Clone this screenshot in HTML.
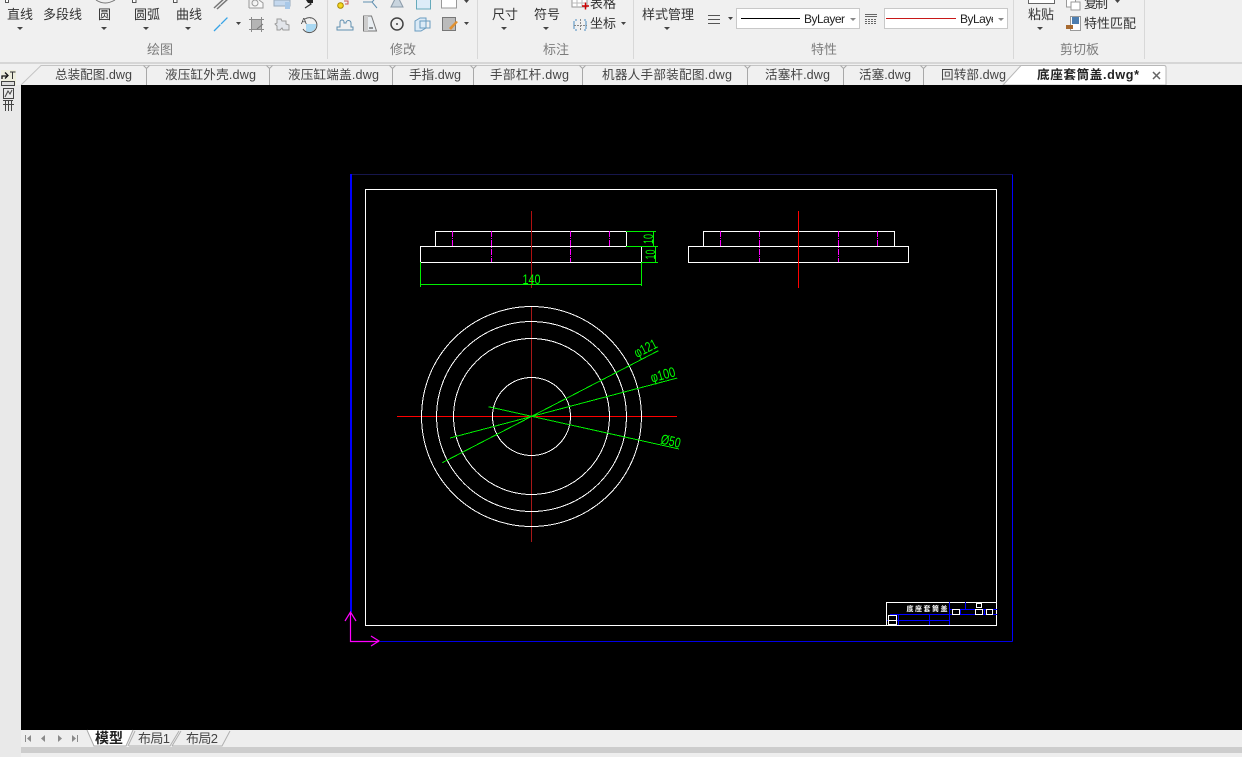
<!DOCTYPE html>
<html><head><meta charset="utf-8">
<style>
html,body{margin:0;padding:0;background:#f0f0f0;width:1242px;height:757px;overflow:hidden}
svg{display:block;position:absolute;left:0;top:0}
text{font-family:"Liberation Sans","Noto Sans CJK SC",sans-serif}
.r{font-size:13px;fill:#333}
.g{font-size:13px;fill:#7c7c7c}
.t{font-size:12.6px;fill:#444}
.d{font-size:14px;fill:#00ff00}
.a{fill:#444}
</style></head>
<body>
<svg width="1242" height="757" viewBox="0 0 1242 757" xmlns="http://www.w3.org/2000/svg">
<rect width="1242" height="757" fill="#f0f0f0"/>
<!-- ribbon separators -->
<g fill="#d8d8d8">
<rect x="327" y="0" width="1" height="59"/><rect x="477" y="0" width="1" height="59"/><rect x="633" y="0" width="1" height="59"/><rect x="1013" y="0" width="1" height="59"/><rect x="1144" y="0" width="1" height="59"/>
</g>
<rect x="0" y="62" width="1242" height="2" fill="#d6d6d6"/>
<!-- ribbon labels -->
<text class="r" x="7" y="19" textLength="26">直线</text>
<text class="r" x="43" y="19" textLength="39">多段线</text>
<text class="r" x="98" y="19" textLength="13">圆</text>
<text class="r" x="134" y="19" textLength="26">圆弧</text>
<text class="r" x="176" y="19" textLength="26">曲线</text>
<text class="r" x="492" y="19" textLength="26">尺寸</text>
<text class="r" x="534" y="19" textLength="26">符号</text>
<text class="r" x="590" y="8" textLength="26">表格</text>
<text class="r" x="590" y="28" textLength="26">坐标</text>
<text class="r" x="642" y="19" textLength="52">样式管理</text>
<text class="r" x="1028" y="19" textLength="26">粘贴</text>
<text class="r" x="1084" y="8" textLength="24">复制</text>
<text class="r" x="1084" y="28" textLength="52">特性匹配</text>
<text class="g" x="147" y="54" textLength="26">绘图</text>
<text class="g" x="390" y="54" textLength="26">修改</text>
<text class="g" x="543" y="54" textLength="26">标注</text>
<text class="g" x="811" y="54" textLength="26">特性</text>
<text class="g" x="1060" y="54" textLength="39">剪切板</text>
<!-- dropdown arrows -->
<g class="a">
<path d="M17 27h6l-3 3z"/><path d="M101 27h6l-3 3z"/><path d="M143 27h6l-3 3z"/><path d="M185 27h6l-3 3z"/>
<path d="M236 22h5l-2.500 3z"/><path d="M464 22h5l-2.500 3z"/><path d="M464 0h5l-2.500 3z"/>
<path d="M501 27h6l-3 3z"/><path d="M543 27h6l-3 3z"/><path d="M621 22h5l-2.500 3z"/><path d="M664 27h6l-3 3z"/>
<path d="M728 17h5l-2.500 3z"/><path d="M1037 27h6l-3 3z"/><path d="M1115 0h5l-2.500 3z"/>
</g>
<!-- draw group icons, clipped at top -->
<g fill="none" stroke="#555">
<rect x="5.500" y="-2" width="3" height="4.500" fill="#fff"/>
<path d="M96 0 Q105 6 115 0" stroke="#777"/>
<rect x="132.500" y="-2" width="3.500" height="4.500" fill="#fff"/>
<rect x="173.500" y="-2" width="3.500" height="4.500" fill="#fff"/>
</g>
<path d="M214 31L228 17" stroke="#36a3e6" stroke-width="1.300" stroke-dasharray="9 1"/>
<path d="M214 8L226 -3M217 9L229 -2" stroke="#777" stroke-width="1.500" fill="none"/>
<path d="M249 8V0M249 8H263V3L259 0" fill="#f8f8f8" stroke="#999"/><circle cx="255" cy="3" r="3" fill="none" stroke="#999"/>
<rect x="274" y="0" width="16" height="6" fill="#c4d8ee" stroke="#9ab"/><rect x="285" y="2" width="5" height="7" fill="#a8c8e8"/>
<path d="M308 1L311 4L305 8" fill="none" stroke="#333" stroke-width="1.200"/><path d="M306 0h7v3h-5z" fill="#222"/>
<!-- hatch, region, boundary -->
<rect x="251.500" y="19.500" width="10" height="10" fill="#b4b4b4" stroke="#999"/>
<path d="M249 19.500h15M249 29.500h15M251.500 17v15M261.500 17v15" stroke="#8a8a8a" fill="none"/>
<path d="M257 29L263 24" stroke="#777"/>
<path d="M277 19h4l1 2h4v3l3 1v5h-6l-1-2-2 2h-3v-4l-2-2 2-1z" fill="#e2e5ea" stroke="#9a9a9a"/>
<path d="M306 24H316A7 7 0 0 1 306 31.300Z" fill="#a9d8f2"/>
<path d="M305 19A7.500 7.500 0 1 1 303 29M310 18a7 7 0 0 1 2 0" fill="none" stroke="#555"/>
<text x="301" y="24" style="font-size:8.500px;fill:#333">A</text>
<!-- modify icons -->
<circle cx="340.500" cy="5.500" r="2.800" fill="#f4d820" stroke="#a80"/><path d="M344 1h4v3h-3" fill="none" stroke="#c55"/>
<path d="M363 2h9l5 6M372 2l2-2" fill="none" stroke="#5f8fb0"/>
<path d="M391 7l4-8h4l4 8z" fill="#c8d4de" stroke="#8a9aa8"/>
<rect x="416.500" y="-2" width="14" height="11" fill="#dcecf8" stroke="#6ab"/>
<rect x="441.500" y="-2" width="15" height="10" fill="#fff" stroke="#999"/>
<path d="M337 30h16v-3h-2v-4a2.500 2.500 0 0 0-5 0h-2v-1a2 2 0 0 0-4 0v5h-3z" fill="none" stroke="#5f8fb0"/>
<path d="M363.500 16h8l5 15h-13z" fill="#e9eef2" stroke="#777"/><path d="M364 16h4v15h-4z" fill="#ccc"/><path d="M369 28h4" stroke="#333"/>
<circle cx="397" cy="24" r="6" fill="none" stroke="#444" stroke-width="1.500"/><circle cx="397" cy="24" r="1" fill="#444"/>
<path d="M415 21l5-3h6v10l-5 3h-6z" fill="#dbeaf6" stroke="#6a9cc0"/><path d="M420 21h10v7h-10z" fill="none" stroke="#6a9cc0"/>
<rect x="442.500" y="17.500" width="13" height="13" fill="#bbb" stroke="#777"/><path d="M449 28l7-7 2 1-7 8z" fill="#e09030"/>
<!-- annotation icons -->
<path d="M572 -2h15v9h-15z" fill="#fff" stroke="#999"/><path d="M577 -2v9M582 -2v9M572 3h15" stroke="#bbb"/><path d="M582 6h7M585.500 2.500v7" stroke="#c00" stroke-width="1.500"/>
<path d="M575 20h2M584 20h2M575 30h2M584 30h2M574 21v8M586 21v8" stroke="#4a8cc0" fill="none"/>
<path d="M580.500 19v12M574 25.500h13" stroke="#888" stroke-dasharray="2 1" fill="none"/>
<!-- properties -->
<path d="M708 15.500h12M708 19.500h12M708 23.500h12" stroke="#555"/>
<rect x="736.500" y="8.500" width="123" height="20" fill="#fff" stroke="#c8c8c8"/>
<rect x="741" y="18" width="59" height="1" fill="#000"/>
<text x="804" y="23" style="font-size:12px;fill:#222" textLength="41">ByLayer</text>
<path d="M850 18h6l-3 3z" fill="#888"/>
<path d="M865 14.500h12M865 16.500h12" stroke="#666"/>
<path d="M865 19.500h12M865 21.500h12M865 23.500h12" stroke="#666" stroke-dasharray="2 1"/>
<rect x="884.500" y="8.500" width="123" height="20" fill="#fff" stroke="#c8c8c8"/>
<rect x="886" y="18" width="70" height="1" fill="#c81818"/>
<svg x="960" y="8" width="33" height="20"><text x="0" y="15" style="font-size:12px;fill:#222" textLength="41">ByLayer</text></svg>
<path d="M998 18h6l-3 3z" fill="#888"/>
<!-- clipboard icons -->
<rect x="1028.500" y="-4" width="26" height="7.500" fill="#fff" stroke="#666"/>
<rect x="1066.500" y="-4" width="9" height="11" fill="#fff" stroke="#999"/><path d="M1071 2h9v8h-9z" fill="#fff" stroke="#999"/>
<path d="M1070.500 16.500h10v14h-10z" fill="#fff" stroke="#999"/><rect x="1072" y="17" width="7" height="7" fill="#4d7eb0"/><path d="M1066 25h7v4h-7z" fill="#a86a30"/>
<!-- tabs -->
<path d="M21 85L41 65.500H1021" fill="none" stroke="#c4c4c4"/>
<g fill="none" stroke="#a8a8a8">
<path d="M146.500 68V85M269.500 68V85M392.500 68V85M473.500 68V85M582.500 68V85M747.500 68V85M843.500 68V85M923.500 68V85"/>
<path d="M143.500 65.500l3 3 3-3M266.500 65.500l3 3 3-3M389.500 65.500l3 3 3-3M470.500 65.500l3 3 3-3M579.500 65.500l3 3 3-3M744.500 65.500l3 3 3-3M840.500 65.500l3 3 3-3M920.500 65.500l3 3 3-3"/>
</g>
<path d="M1003 85L1021 65.500H1164q2 0 2 2V85z" fill="#fff" stroke="#b8b8b8"/>
<text class="t" x="55" y="79" textLength="77">总装配图.dwg</text>
<text class="t" x="165" y="79" textLength="91">液压缸外壳.dwg</text>
<text class="t" x="288" y="79" textLength="91">液压缸端盖.dwg</text>
<text class="t" x="409" y="79" textLength="52">手指.dwg</text>
<text class="t" x="490" y="79" textLength="79">手部杠杆.dwg</text>
<text class="t" x="602" y="79" textLength="130">机器人手部装配图.dwg</text>
<text class="t" x="765" y="79" textLength="65">活塞杆.dwg</text>
<text class="t" x="859" y="79" textLength="52">活塞.dwg</text>
<text class="t" x="941" y="79" textLength="65">回转部.dwg</text>
<text x="1037" y="79" style="font-size:12.600px;font-weight:700;fill:#222" textLength="102">底座套筒盖.dwg*</text>
<path d="M1153 72l7 7M1160 72l-7 7" stroke="#666" stroke-width="1.500"/>
<!-- left rail -->
<rect x="0" y="85" width="21" height="672" fill="#e9e9e9"/>
<rect x="1" y="70" width="15" height="16" fill="#eeeedd"/>
<path d="M2 79v-3h5M5 72.500l3 3-3 3" fill="none" stroke="#111" stroke-width="1.300"/><path d="M10 72h5.500M12.500 72v7" stroke="#333"/>
<rect x="1.500" y="81.500" width="13" height="4" fill="#ddd" stroke="#444"/>
<rect x="3.500" y="88.500" width="10" height="10" fill="none" stroke="#444"/><path d="M5 97l3-6 2 3 2-4" fill="none" stroke="#444"/>
<path d="M3 100.500h10M5.500 100v11M8.500 100v11M11.500 100v11M3 104.500h11" fill="none" stroke="#444"/>
<!-- canvas -->
<rect x="21" y="85" width="1221" height="645" fill="#000"/>
<g shape-rendering="crispEdges" fill="none" stroke-width="1">
<path d="M380 641.500H1012.500" stroke="#0000e6"/>
<path d="M351 174.500H1012.500" stroke="#16164c"/>
<rect x="350" y="174" width="2" height="438" fill="#0000ff"/>
<path d="M1012.500 174.500V641.500" stroke="#0000ff"/>
<rect x="365.500" y="189.500" width="631" height="436" stroke="#fff"/>
<!-- left view -->
<rect x="435.500" y="231.500" width="191" height="15" stroke="#fff"/>
<rect x="420.500" y="246.500" width="221" height="16" stroke="#fff"/>
<path d="M452.500 231V246M491.500 231V262M570.500 231V262M609.500 231V246" stroke="#ff00ff" stroke-dasharray="6 1 1 1"/>
<path d="M531.500 211V288" stroke="#b01010"/>
<path d="M420.500 262V287M641.500 262V286M420 284.500H642" stroke="#00f000"/>
<path d="M626 231.500H656M626 246.500H658M641 262.500H658M653.500 231V247M655.500 246V263" stroke="#00f000"/>
<!-- right view -->
<rect x="703.500" y="231.500" width="191" height="15" stroke="#fff"/>
<rect x="688.500" y="246.500" width="220" height="16" stroke="#fff"/>
<path d="M720.500 231V246M759.500 231V262M838.500 231V262M877.500 231V246" stroke="#ff00ff" stroke-dasharray="6 1 1 1"/>
<path d="M798.500 211V288" stroke="#ff0000"/>
<!-- circle axes -->
<path d="M397 416.500H677" stroke="#ff0000"/>
<path d="M531.500 306V542" stroke="#a81818"/>
<!-- title block -->
<rect x="886.500" y="602.500" width="110" height="23" stroke="#fff"/>
<path d="M949.500 602V625M949 609.500H997M949 614.500H997M965.500 602V609M887 620.500H949M890 614.500H949M898.500 614V625M929.500 614V625M960.500 609V614M984.500 609V614" stroke="#0000ff"/>
<rect x="952.500" y="609.500" width="7" height="5" stroke="#fff" fill="#000"/>
<rect x="975.500" y="609.500" width="7" height="5" stroke="#fff" fill="#000"/>
<rect x="986.500" y="609.500" width="6" height="5" stroke="#fff" fill="#000"/>
<rect x="976.500" y="603.500" width="5" height="4" stroke="#fff" fill="#000"/>
<rect x="888.500" y="615.500" width="8" height="9" stroke="#fff" fill="#000"/>
<path d="M888 620.500H897" stroke="#fff"/>
</g>
<g fill="none" stroke="#fff" stroke-width="1" shape-rendering="crispEdges">
<circle cx="531.500" cy="416.500" r="110"/>
<circle cx="531.500" cy="416.500" r="95"/>
<circle cx="531.500" cy="416.500" r="78"/>
<circle cx="531.500" cy="416.500" r="39"/>
</g>
<path d="M442.300 462.700L658.300 350.700M450 438L677.300 378M488.300 406.700L679 449" stroke="#00f000" fill="none" shape-rendering="crispEdges"/>
<!-- UCS -->
<path d="M350.500 612V641.500H379M345 621L350.500 612L356 621M371 636L379 641L371 646" fill="none" stroke="#ff00ff" stroke-width="1.200"/>
<!-- dims text -->
<text class="d" x="522.500" y="284" textLength="18" lengthAdjust="spacingAndGlyphs">140</text>
<text class="d" transform="translate(653,244) rotate(-90)" textLength="10" lengthAdjust="spacingAndGlyphs">10</text>
<text class="d" transform="translate(655,259.500) rotate(-90)" textLength="10" lengthAdjust="spacingAndGlyphs">10</text>
<text class="d" transform="translate(637,358) rotate(-27)" textLength="24" lengthAdjust="spacingAndGlyphs">φ121</text>
<text class="d" transform="translate(652,382.500) rotate(-15)" textLength="25" lengthAdjust="spacingAndGlyphs">φ100</text>
<text class="d" transform="translate(660,443.500) rotate(12.700)" textLength="20" lengthAdjust="spacingAndGlyphs">Ø50</text>
<text x="906.500 915 923.500 932 940.500" y="611" style="font-size:7px;font-weight:700;fill:#fff">底座套筒盖</text>
<!-- bottom bar -->
<rect x="0" y="730" width="1242" height="27" fill="#eeeeee"/>
<rect x="0" y="730" width="21" height="27" fill="#e9e9e9"/>
<rect x="21" y="747" width="1221" height="6" fill="#cdcdcd"/>
<g fill="#8a8a8a">
<path d="M25 735h1v7h-1zM31 735v7l-4-3.500z"/><path d="M45 735v7l-4-3.500z"/><path d="M58 735v7l4-3.500z"/><path d="M72 735v7l4-3.500zM77 735h1v7h-1z"/>
</g>
<path d="M87 730L94 746H126L133 730z" fill="#fff"/>
<path d="M87 730L94 746H126L133 730" fill="none" stroke="#aaa"/>
<path d="M128 746L135 731M129 746H170L179 731M172 746H222L230 731M172 746L181 731" fill="none" stroke="#b0b0b0"/>
<text x="95" y="743" style="font-size:14px;font-weight:700;fill:#222" textLength="28">模型</text>
<text x="138" y="743" style="font-size:13px;fill:#444" textLength="32">布局1</text>
<text x="186" y="743" style="font-size:13px;fill:#444" textLength="32">布局2</text>
</svg>
</body></html>
